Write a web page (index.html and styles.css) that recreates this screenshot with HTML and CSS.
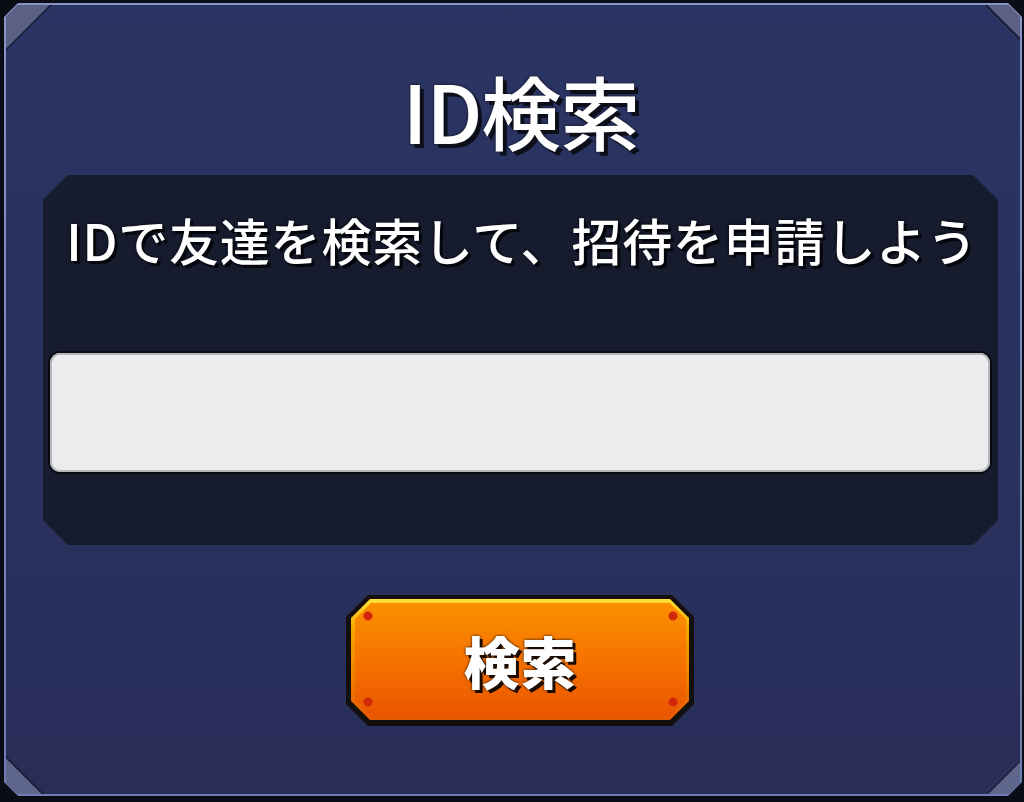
FILE: index.html
```html
<!DOCTYPE html>
<html lang="ja">
<head>
<meta charset="utf-8">
<title>ID検索</title>
<link rel="stylesheet" href="styles.css">
</head>
<body>
<div class="frame">
  <div class="panel">
    <h1 class="title">ID検索</h1>
    <div class="box">
      <p class="hint">IDで友達を検索して、招待を申請しよう</p>
      <input class="id-input" type="text" aria-label="ID">
    </div>
    <div class="btn">
      <div class="btn-rim">
        <div class="btn-face">検索</div>
      </div>
    </div>
  </div>
</div>
</body>
</html>
```
FILE: styles.css
```css
html, body {
  margin: 0;
  padding: 0;
}
body {
  width: 1024px;
  height: 802px;
  background: #0a0c16;
  overflow: hidden;
  font-family: "Noto Sans CJK JP", "Noto Sans", sans-serif;
}
.frame {
  box-sizing: border-box;
  width: 1018px;
  height: 793px;
  margin: 3px 0 0 4px;
  padding: 2px;
  background: linear-gradient(#8894c4, #6f7cb0);
  clip-path: polygon(14px 0, calc(100% - 14px) 0, 100% 14px, 100% calc(100% - 14px), calc(100% - 14px) 100%, 14px 100%, 0 calc(100% - 14px), 0 14px);
}
.panel {
  box-sizing: border-box;
  height: 100%;
  display: flex;
  flex-direction: column;
  align-items: center;
  padding-top: 56px;
  background:
    linear-gradient(135deg, #5a6184 0 31px, #1c2240 31px 33px, transparent 33px) left top / 50px 50px no-repeat,
    linear-gradient(225deg, #5a6184 0 23px, #1c2240 23px 25px, transparent 25px) right top / 40px 40px no-repeat,
    linear-gradient(45deg, #5f678c 0 25px, #1c2240 25px 27px, transparent 27px) left bottom / 44px 44px no-repeat,
    linear-gradient(315deg, #5f678c 0 22px, #1c2240 22px 24px, transparent 24px) right bottom / 40px 40px no-repeat,
    linear-gradient(#2b3563, #282e58);
  clip-path: polygon(12px 0, calc(100% - 12px) 0, 100% 12px, 100% calc(100% - 12px), calc(100% - 12px) 100%, 12px 100%, 0 calc(100% - 12px), 0 12px);
}
.title {
  margin: 0 0 0 16px;
  height: 96px;
  line-height: 96px;
  font-size: 80px;
  font-weight: 500;
  color: #ffffff;
  letter-spacing: -1px;
  text-shadow: 4px 4px 0 #0c0e1a, 0 0 3px #0c0e1a;
}
.box {
  box-sizing: border-box;
  align-self: flex-start;
  width: 955px;
  height: 370px;
  margin: 18px 0 0 37px;
  padding: 34px 8px 0 7px;
  background: #161b2d;
  clip-path: polygon(25px 0, calc(100% - 25px) 0, 100% 25px, 100% calc(100% - 25px), calc(100% - 25px) 100%, 25px 100%, 0 calc(100% - 25px), 0 25px);
  display: flex;
  flex-direction: column;
  align-items: center;
}
.hint {
  margin: 0 0 0 4px;
  height: 60px;
  line-height: 60px;
  font-size: 50px;
  font-weight: 500;
  color: #ffffff;
  letter-spacing: 0.8px;
  white-space: nowrap;
  text-shadow: 3px 3px 0 #05060c, 0 0 3px #05060c;
}
.id-input {
  box-sizing: border-box;
  align-self: stretch;
  height: 119px;
  margin-top: 84px;
  border: none;
  border-radius: 10px;
  background: #ececee;
  box-shadow: 0 0 0 2px #090b12, inset 0 0 0 2px #b8b8bc;
  outline: none;
}
.btn {
  box-sizing: border-box;
  width: 348px;
  height: 131px;
  margin: 50px 0 0 14px;
  padding: 4px 5px 6px 5px;
  background: #120f0c;
  clip-path: polygon(22px 0, calc(100% - 22px) 0, 100% 22px, 100% calc(100% - 22px), calc(100% - 22px) 100%, 22px 100%, 0 calc(100% - 22px), 0 22px);
}
.btn-rim {
  box-sizing: border-box;
  height: 100%;
  padding: 4px 3px 4px 4px;
  background: linear-gradient(#ffe23a, #f7a400 25%, #ef7a00 70%, #e45a00);
  clip-path: polygon(19px 0, calc(100% - 19px) 0, 100% 19px, 100% calc(100% - 19px), calc(100% - 19px) 100%, 19px 100%, 0 calc(100% - 19px), 0 19px);
}
.btn-face {
  height: 100%;
  display: flex;
  align-items: center;
  justify-content: center;
  font-size: 56px;
  font-weight: 900;
  color: #ffffff;
  letter-spacing: 1px;
  text-shadow: 3px 3px 0 #1a0a00, 0 0 3px #1a0a00;
  background:
    radial-gradient(circle at 13px 13px, #d2280c 0 4px, transparent 5px),
    radial-gradient(circle at calc(100% - 13px) 13px, #d2280c 0 4px, transparent 5px),
    radial-gradient(circle at 13px calc(100% - 14px), #d2280c 0 4px, transparent 5px),
    radial-gradient(circle at calc(100% - 13px) calc(100% - 14px), #d2280c 0 4px, transparent 5px),
    linear-gradient(#fb9000, #f57000 55%, #ea5600);
  clip-path: polygon(16px 0, calc(100% - 16px) 0, 100% 16px, 100% calc(100% - 16px), calc(100% - 16px) 100%, 16px 100%, 0 calc(100% - 16px), 0 16px);
}
```
